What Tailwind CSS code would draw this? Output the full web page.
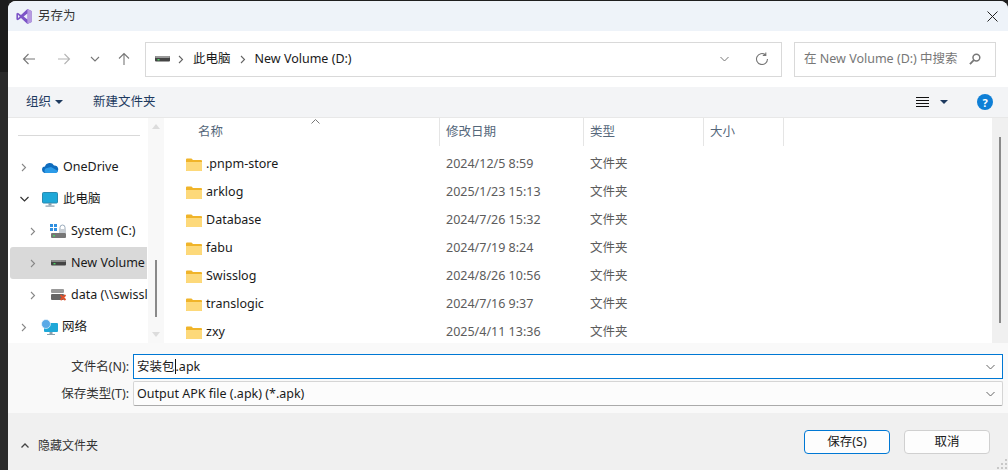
<!doctype html>
<html lang="zh">
<head>
<meta charset="utf-8">
<script src="https://cdn.jsdelivr.net/npm/@tailwindcss/browser@4"></script>
<title>另存为</title>
</head>
<body class="w-[1008px] h-[470px] overflow-hidden bg-[#1f1f1f] font-['Noto_Sans','Noto_Sans_CJK_SC',sans-serif] text-[12.5px] text-[#1a1a1a]">
<div class="flex h-[470px]">
  <!-- desktop strip behind the dialog -->
  <div class="w-[8px] flex flex-col">
    <div class="h-[72px] bg-[#1c1c1c]"></div>
    <div class="flex-1 bg-[#2a2a2a]"></div>
  </div>

  <div class="flex-1 mt-[1px] flex flex-col rounded-t-[8px] overflow-hidden bg-white">
    <!-- title bar -->
    <div class="h-[30px] bg-[#eef3f9] flex items-center pl-[8px] pr-[8px]">
      <svg class="w-[16px] h-[17px]" viewBox="0 0 16 16">
        <path d="M11.4 0.6 15.6 2.4V13.6L11.4 15.4 5 9.4 1.9 11.8 0.4 11V5L1.9 4.2 5 6.6Z" fill="#7d55c7"/>
        <path d="M2 6.2V9.800L3.800 8Z" fill="#eef3f9"/>
        <path d="M11.4 0.6 15.6 2.4V13.6L11.4 15.4Z" fill="#b59ae0"/>
        <path d="M11.4 4.900V11.100L7.600 8Z" fill="#eef3f9"/>
      </svg>
      <span class="ml-[6px] text-[#333]">另存为</span>
      <svg class="ml-auto mr-[2px] w-[11px] h-[11px]" viewBox="0 0 11 11"><path d="M.5.5l10 10M10.500.5l-10 10" stroke="#222" stroke-width="1" fill="none"/></svg>
    </div>

    <!-- nav row -->
    <div class="h-[56px] flex items-center">
      <div class="w-[137px] flex items-center text-[#666]">
        <svg class="ml-[14px] w-[14px] h-[14px]" viewBox="0 0 14 14"><path d="M13 7H1.500M6.500 2 1.500 7l5 5" stroke="#777" stroke-width="1.100" fill="none"/></svg>
        <svg class="ml-[21px] w-[14px] h-[14px]" viewBox="0 0 14 14"><path d="M1 7h11.500M7.500 2l5 5-5 5" stroke="#b4b4b4" stroke-width="1.100" fill="none"/></svg>
        <svg class="ml-[19px] w-[10px] h-[10px]" viewBox="0 0 10 10"><path d="M1 3l4 4 4-4" stroke="#777" stroke-width="1.100" fill="none"/></svg>
        <svg class="ml-[17px] w-[14px] h-[14px]" viewBox="0 0 14 14"><path d="M7 13V1.500M2 6.500l5-5 5 5" stroke="#777" stroke-width="1.100" fill="none"/></svg>
      </div>
      <div class="w-[637px] h-[35px] border border-[#d9d9d9] flex items-center pl-[9px] pr-[12px]">
        <svg class="w-[15px] h-[6px]" viewBox="0 0 15 6"><rect width="15" height="5.500" rx="1" fill="#444"/><rect width="15" height="2" rx="1" fill="#9a9a9a"/><rect x="2.500" y="3" width="2" height="1.400" fill="#4cd263"/></svg>
        <svg class="ml-[8px] w-[6px] h-[9px]" viewBox="0 0 6 9"><path d="M1 1l3.500 3.500L1 8" stroke="#666" stroke-width="1.100" fill="none"/></svg>
        <span class="ml-[9px]">此电脑</span>
        <svg class="ml-[9px] w-[6px] h-[9px]" viewBox="0 0 6 9"><path d="M1 1l3.500 3.500L1 8" stroke="#666" stroke-width="1.100" fill="none"/></svg>
        <span class="ml-[9px]">New Volume (D:)</span>
        <svg class="ml-auto w-[9px] h-[6px]" viewBox="0 0 9 6"><path d="M.5 1 4.500 5l4-4" stroke="#777" fill="none"/></svg>
        <svg class="ml-[26px] w-[14px] h-[14px]" viewBox="0 0 14 14"><path d="M12.500 7A5.500 5.500 0 1 1 10.400 2.700M10.800 .4v3h-3" stroke="#777" stroke-width="1.100" fill="none"/></svg>
      </div>
      <div class="ml-[12px] w-[202px] h-[35px] border border-[#d9d9d9] flex items-center pl-[9px] pr-[14px] text-[#777]">
        <span class="whitespace-nowrap">在 New Volume (D:) 中搜索</span>
        <svg class="ml-auto w-[12px] h-[12px]" viewBox="0 0 13 13"><circle cx="8" cy="5" r="3.700" stroke="#777" stroke-width="1.600" fill="none"/><path d="M5.200 7.800 1 12" stroke="#777" stroke-width="2"/></svg>
      </div>
    </div>

    <!-- command bar -->
    <div class="h-[31px] bg-[#f3f4f6] border-b border-[#e8e8e8] flex items-center text-[#1e3a5f]">
      <span class="ml-[18px] pt-[1px]">组织</span>
      <svg class="ml-[4px] w-[8px] h-[4px]" viewBox="0 0 8 4"><path d="M0 0h8L4 4Z" fill="#1e3a5f"/></svg>
      <span class="ml-[30px] pt-[1px]">新建文件夹</span>
      <svg class="ml-auto w-[13px] h-[11px]" viewBox="0 0 13 11"><path d="M0 .5h13M0 3.500h13M0 6.500h13M0 9.500h13" stroke="#111" stroke-width="1"/></svg>
      <svg class="ml-[11px] w-[8px] h-[4px]" viewBox="0 0 8 4"><path d="M0 0h8L4 4Z" fill="#1e3a5f"/></svg>
      <div class="ml-[29px] mr-[15px] w-[16px] h-[16px] rounded-full bg-[#0f7fd6] flex items-center justify-center text-white text-[11px] font-bold leading-none">?</div>
    </div>

    <!-- browser area -->
    <div class="h-[225px] flex">
      <!-- tree -->
      <div class="w-[140px] flex flex-col pl-[2px] overflow-hidden">
        <div class="ml-[8px] mr-[8px] mt-[17px] h-[1px] bg-[#d9d9d9]"></div>
        <div class="mt-[15px] h-[32px] flex items-center whitespace-nowrap">
          <svg class="ml-[11px] w-[6px] h-[9px]" viewBox="0 0 6 9"><path d="M1 1l3.500 3.500L1 8" stroke="#888" stroke-width="1.100" fill="none"/></svg>
          <svg class="ml-[15px] w-[17px] h-[11px]" viewBox="0 0 17 11"><path d="M3.500 11A3.200 3.200 0 0 1 3 4.600 5 5 0 0 1 12 3.400 3.900 3.900 0 0 1 13.500 11Z" fill="#0f6cbd"/><path d="M3.500 11A2.800 2.800 0 0 1 5 6l4-1 7 4a3 3 0 0 1-2.500 2Z" fill="#2b9be8"/></svg>
          <span class="ml-[4px]">OneDrive</span>
        </div>
        <div class="h-[32px] flex items-center whitespace-nowrap">
          <svg class="ml-[10px] w-[9px] h-[6px]" viewBox="0 0 9 6"><path d="M.5 1 4.500 5l4-4" stroke="#333" stroke-width="1.200" fill="none"/></svg>
          <svg class="ml-[13px] w-[16px] h-[15px]" viewBox="0 0 16 15"><rect x=".5" y=".5" width="15" height="10.500" rx="1" fill="#1fa8d8" stroke="#2a8ab0"/><rect x="6.500" y="11" width="3" height="2.500" fill="#8aa0ad"/><rect x="3.500" y="13.500" width="9" height="1.200" fill="#8aa0ad"/></svg>
          <span class="ml-[5px]">此电脑</span>
        </div>
        <div class="h-[32px] flex items-center whitespace-nowrap">
          <svg class="ml-[20px] w-[6px] h-[9px]" viewBox="0 0 6 9"><path d="M1 1l3.500 3.500L1 8" stroke="#888" stroke-width="1.100" fill="none"/></svg>
          <svg class="ml-[14px] w-[17px] h-[15px]" viewBox="0 0 17 15"><rect width="7" height="7" fill="#2f8fe0"/><path d="M3.500 0v7M0 3.500h7" stroke="#fff"/><rect x="1" y="9" width="15" height="5" rx="1" fill="#777"/><rect x="3" y="11" width="2" height="1.500" fill="#4cd263"/><path d="M10 6V3.500a2.500 2.500 0 0 1 5 0V8" stroke="#9ab" fill="none"/><rect x="9" y="5" width="7" height="4" fill="#c8ced4"/></svg>
          <span class="ml-[4px]">System (C:)</span>
        </div>
        <div class="h-[32px] mr-[1px] flex items-center whitespace-nowrap bg-[#d9d9d9] rounded-l-[3px] overflow-hidden">
          <svg class="ml-[20px] w-[6px] h-[9px]" viewBox="0 0 6 9"><path d="M1 1l3.500 3.500L1 8" stroke="#888" stroke-width="1.100" fill="none"/></svg>
          <svg class="ml-[15px] w-[15px] h-[6px]" viewBox="0 0 15 6"><rect width="15" height="5.500" rx="1" fill="#444"/><rect width="15" height="2" rx="1" fill="#8a8a8a"/><rect x="2.500" y="3" width="2" height="1.400" fill="#4cd263"/></svg>
          <span class="ml-[5px]">New Volume</span>
        </div>
        <div class="h-[32px] flex items-center whitespace-nowrap">
          <svg class="ml-[20px] w-[6px] h-[9px]" viewBox="0 0 6 9"><path d="M1 1l3.500 3.500L1 8" stroke="#888" stroke-width="1.100" fill="none"/></svg>
          <svg class="ml-[15px] w-[16px] h-[12px]" viewBox="0 0 16 12"><rect width="13" height="4" rx="1" fill="#999"/><rect y="5" width="13" height="6" rx="1" fill="#666"/><path d="M9.500 6l5 5M14.500 6l-5 5" stroke="#e0502a" stroke-width="1.800"/></svg>
          <span class="ml-[4px]">data (\\swissl</span>
        </div>
        <div class="h-[32px] flex items-center whitespace-nowrap">
          <svg class="ml-[11px] w-[6px] h-[9px]" viewBox="0 0 6 9"><path d="M1 1l3.500 3.500L1 8" stroke="#888" stroke-width="1.100" fill="none"/></svg>
          <svg class="ml-[14px] w-[17px] h-[16px]" viewBox="0 0 17 16"><rect x="3" y="4" width="14" height="9" rx="1" fill="#1fa8d8"/><rect x="8.500" y="13" width="3" height="2" fill="#8aa0ad"/><rect x="6" y="15" width="8" height="1" fill="#8aa0ad"/><circle cx="5" cy="5" r="4.500" fill="#5aa9e6" stroke="#fff" stroke-width=".6"/></svg>
          <span class="ml-[4px]">网络</span>
        </div>
      </div>

      <!-- tree scrollbar -->
      <div class="w-[16px] bg-[#f8f8f8] flex flex-col items-center">
        <svg class="mt-[6px] w-[8px] h-[5px]" viewBox="0 0 8 5"><path d="M4 0l4 5H0Z" fill="#dcdcdc"/></svg>
        <div class="mt-[131px] w-[2px] h-[57px] bg-[#8a8a8a]"></div>
        <svg class="mt-[15px] w-[8px] h-[5px]" viewBox="0 0 8 5"><path d="M4 5l4-5H0Z" fill="#dcdcdc"/></svg>
      </div>

      <!-- file list -->
      <div class="flex-1 flex flex-col text-[#5c5c5c] overflow-hidden">
        <div class="h-[28px] shrink-0 flex text-[#55677a] relative">
          <svg class="absolute left-[147px] top-[1px] w-[9px] h-[5px]" viewBox="0 0 9 5"><path d="M.5 4.500 4.500.5l4 4" stroke="#777" fill="none"/></svg>
          <div class="w-[276px] border-r border-[#e5e5e5] pl-[34px] flex items-center">名称</div>
          <div class="w-[144px] border-r border-[#e5e5e5] pl-[6px] flex items-center">修改日期</div>
          <div class="w-[120px] border-r border-[#e5e5e5] pl-[6px] flex items-center">类型</div>
          <div class="w-[80px] border-r border-[#e5e5e5] pl-[6px] flex items-center">大小</div>
        </div>
        <div class="mt-[4px] shrink-0 grid grid-cols-[276px_144px_1fr] auto-rows-[28px] items-center">
          <div class="pl-[22px] flex items-center gap-[4px] text-[#1a1a1a]"><svg class="w-[16px] h-[13px]" viewBox="0 0 16 13"><path d="M0 1.500A1 1 0 0 1 1 .5h4.500L7 2h8a1 1 0 0 1 1 1v9a1 1 0 0 1-1 1H1a1 1 0 0 1-1-1Z" fill="#f0b429"/><path d="M0 4h16v8a1 1 0 0 1-1 1H1a1 1 0 0 1-1-1Z" fill="#fdd97a"/></svg>.pnpm-store</div>
          <div class="pl-[6px]">2024/12/5 8:59</div><div class="pl-[6px]">文件夹</div>
          <div class="pl-[22px] flex items-center gap-[4px] text-[#1a1a1a]"><svg class="w-[16px] h-[13px]" viewBox="0 0 16 13"><path d="M0 1.500A1 1 0 0 1 1 .5h4.500L7 2h8a1 1 0 0 1 1 1v9a1 1 0 0 1-1 1H1a1 1 0 0 1-1-1Z" fill="#f0b429"/><path d="M0 4h16v8a1 1 0 0 1-1 1H1a1 1 0 0 1-1-1Z" fill="#fdd97a"/></svg>arklog</div>
          <div class="pl-[6px]">2025/1/23 15:13</div><div class="pl-[6px]">文件夹</div>
          <div class="pl-[22px] flex items-center gap-[4px] text-[#1a1a1a]"><svg class="w-[16px] h-[13px]" viewBox="0 0 16 13"><path d="M0 1.500A1 1 0 0 1 1 .5h4.500L7 2h8a1 1 0 0 1 1 1v9a1 1 0 0 1-1 1H1a1 1 0 0 1-1-1Z" fill="#f0b429"/><path d="M0 4h16v8a1 1 0 0 1-1 1H1a1 1 0 0 1-1-1Z" fill="#fdd97a"/></svg>Database</div>
          <div class="pl-[6px]">2024/7/26 15:32</div><div class="pl-[6px]">文件夹</div>
          <div class="pl-[22px] flex items-center gap-[4px] text-[#1a1a1a]"><svg class="w-[16px] h-[13px]" viewBox="0 0 16 13"><path d="M0 1.500A1 1 0 0 1 1 .5h4.500L7 2h8a1 1 0 0 1 1 1v9a1 1 0 0 1-1 1H1a1 1 0 0 1-1-1Z" fill="#f0b429"/><path d="M0 4h16v8a1 1 0 0 1-1 1H1a1 1 0 0 1-1-1Z" fill="#fdd97a"/></svg>fabu</div>
          <div class="pl-[6px]">2024/7/19 8:24</div><div class="pl-[6px]">文件夹</div>
          <div class="pl-[22px] flex items-center gap-[4px] text-[#1a1a1a]"><svg class="w-[16px] h-[13px]" viewBox="0 0 16 13"><path d="M0 1.500A1 1 0 0 1 1 .5h4.500L7 2h8a1 1 0 0 1 1 1v9a1 1 0 0 1-1 1H1a1 1 0 0 1-1-1Z" fill="#f0b429"/><path d="M0 4h16v8a1 1 0 0 1-1 1H1a1 1 0 0 1-1-1Z" fill="#fdd97a"/></svg>Swisslog</div>
          <div class="pl-[6px]">2024/8/26 10:56</div><div class="pl-[6px]">文件夹</div>
          <div class="pl-[22px] flex items-center gap-[4px] text-[#1a1a1a]"><svg class="w-[16px] h-[13px]" viewBox="0 0 16 13"><path d="M0 1.500A1 1 0 0 1 1 .5h4.500L7 2h8a1 1 0 0 1 1 1v9a1 1 0 0 1-1 1H1a1 1 0 0 1-1-1Z" fill="#f0b429"/><path d="M0 4h16v8a1 1 0 0 1-1 1H1a1 1 0 0 1-1-1Z" fill="#fdd97a"/></svg>translogic</div>
          <div class="pl-[6px]">2024/7/16 9:37</div><div class="pl-[6px]">文件夹</div>
          <div class="pl-[22px] flex items-center gap-[4px] text-[#1a1a1a]"><svg class="w-[16px] h-[13px]" viewBox="0 0 16 13"><path d="M0 1.500A1 1 0 0 1 1 .5h4.500L7 2h8a1 1 0 0 1 1 1v9a1 1 0 0 1-1 1H1a1 1 0 0 1-1-1Z" fill="#f0b429"/><path d="M0 4h16v8a1 1 0 0 1-1 1H1a1 1 0 0 1-1-1Z" fill="#fdd97a"/></svg>zxy</div>
          <div class="pl-[6px]">2025/4/11 13:36</div><div class="pl-[6px]">文件夹</div>
        </div>
      </div>

      <!-- list scrollbar -->
      <div class="w-[16px] bg-[#f0f0f0] flex justify-center">
        <div class="mt-[19px] w-[2px] h-[186px] bg-[#8a8a8a]"></div>
      </div>
    </div>

    <!-- file name fields -->
    <div class="h-[70px] bg-[#f9f9f9] pt-[11px] pr-[5px] flex flex-col gap-[2px]">
      <div class="flex items-center h-[25px]">
        <label class="w-[121px] pt-[1px] text-right text-[#333]">文件名(N):</label>
        <div class="ml-[4px] flex-1 h-[25px] bg-white border border-[#0078d4] flex items-center pl-[3px] pr-[7px]">
          <span class="pt-[1px]">安装包</span><span class="w-[1px] h-[15px] bg-[#111]"></span><span class="pt-[1px]">.apk</span>
          <svg class="ml-auto w-[9px] h-[6px]" viewBox="0 0 9 6"><path d="M.5 1 4.500 5l4-4" stroke="#666" fill="none"/></svg>
        </div>
      </div>
      <div class="flex items-center h-[25px]">
        <label class="w-[121px] pt-[1px] text-right text-[#333]">保存类型(T):</label>
        <div class="ml-[4px] flex-1 h-[25px] bg-[#fcfcfc] border border-[#d5d5d5] border-b-[#aaaaaa] rounded-[2px] flex items-center pl-[3px] pr-[7px]">
          <span class="pt-[1px]">Output APK file (.apk) (*.apk)</span>
          <svg class="ml-auto w-[9px] h-[6px]" viewBox="0 0 9 6"><path d="M.5 1 4.500 5l4-4" stroke="#666" fill="none"/></svg>
        </div>
      </div>
    </div>

    <!-- footer -->
    <div class="flex-1 bg-[#f0f0f0] flex items-center relative">
      <svg class="ml-[13px] mt-[8px] w-[8px] h-[5px]" viewBox="0 0 8 5"><path d="M.5 4.500 4 1l3.500 3.500" stroke="#444" stroke-width="1.300" fill="none"/></svg>
      <span class="ml-[9px] mt-[8px] text-[12px] text-[#333]">隐藏文件夹</span>
      <button class="ml-auto h-[24px] w-[86px] pt-[1px] bg-[#fdfdfd] border border-[#0078d4] rounded-[4px]">保存(S)</button>
      <button class="ml-[14px] mr-[18px] h-[24px] w-[86px] pt-[1px] bg-[#fdfdfd] border border-[#d0d0d0] rounded-[4px]">取消</button>
      <svg class="absolute right-[1px] bottom-[1px] w-[10px] h-[10px]" viewBox="0 0 10 10"><path d="M8 0h2v2H8ZM4 4h2v2H4ZM8 4h2v2H8ZM0 8h2v2H0ZM4 8h2v2H4ZM8 8h2v2H8Z" fill="#c8c8c8"/></svg>
    </div>
  </div>
</div>
</body>
</html>
